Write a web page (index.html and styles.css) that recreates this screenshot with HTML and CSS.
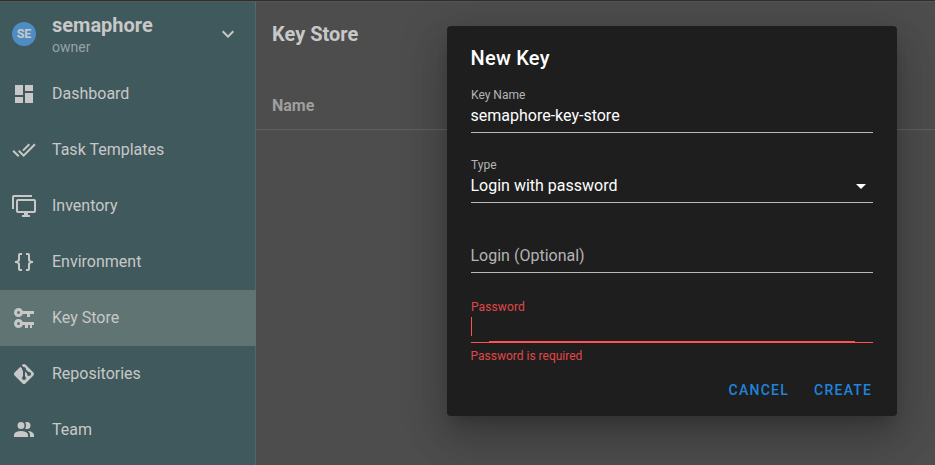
FILE: index.html
```html
<!DOCTYPE html>
<html lang="en">
<head>
<meta charset="utf-8">
<title>Key Store</title>
<link rel="stylesheet" href="styles.css">
</head>
<body>
<div class="app">
  <aside class="sidebar">
    <header class="project">
      <span class="avatar">SE</span>
      <div class="project-info">
        <div class="project-name">semaphore</div>
        <div class="project-role">owner</div>
      </div>
      <svg class="icon" viewBox="0 0 24 24"><path d="M7.41,8.58L12,13.17L16.59,8.58L18,10L12,16L6,10L7.41,8.58Z"/></svg>
    </header>
    <nav class="nav">
      <a class="nav-item"><svg class="icon" viewBox="0 0 24 24"><path d="M13,3V9H21V3M13,21H21V11H13M3,21H11V15H3M3,13H11V3H3V13Z"/></svg><span>Dashboard</span></a>
      <a class="nav-item"><svg class="icon" viewBox="0 0 24 24"><path d="M0.41,13.41L6,19L7.41,17.58L1.83,12M22.24,5.58L11.66,16.17L7.5,12L6.07,13.41L11.66,19L23.66,7M18,7L16.59,5.58L10.24,11.93L11.66,13.34L18,7Z"/></svg><span>Task Templates</span></a>
      <a class="nav-item"><svg class="icon" viewBox="0 0 24 24"><path d="M22,17V7H6V17H22M22,5A2,2 0 0,1 24,7V17C24,18.11 23.1,19 22,19H16V21H18V23H10V21H12V19H6C4.89,19 4,18.11 4,17V7A2,2 0 0,1 6,5H22M2,3V15H0V3A2,2 0 0,1 2,1H20V3H2Z"/></svg><span>Inventory</span></a>
      <a class="nav-item"><svg class="icon" viewBox="0 0 24 24"><path d="M8,3A2,2 0 0,0 6,5V9A2,2 0 0,1 4,11H3V13H4A2,2 0 0,1 6,15V19A2,2 0 0,0 8,21H10V19H8V14A2,2 0 0,0 6,12A2,2 0 0,0 8,10V5H10V3M16,3A2,2 0 0,1 18,5V9A2,2 0 0,0 20,11H21V13H20A2,2 0 0,0 18,15V19A2,2 0 0,1 16,21H14V19H16V14A2,2 0 0,1 18,12A2,2 0 0,1 16,10V5H14V3H16Z"/></svg><span>Environment</span></a>
      <a class="nav-item active"><svg class="icon" viewBox="0 0 24 24"><path d="M6.5,2C8.46,2 10.13,3.25 10.74,5H22V8H18V11H15V8H10.74C10.13,9.75 8.46,11 6.5,11C4,11 2,9 2,6.5C2,4 4,2 6.5,2M6.5,5A1.5,1.5 0 0,0 5,6.5A1.5,1.5 0 0,0 6.5,8A1.5,1.5 0 0,0 8,6.5A1.5,1.5 0 0,0 6.5,5M6.5,13C8.46,13 10.13,14.25 10.74,16H22V19H20V22H18V19H16V22H13V19H10.74C10.13,20.75 8.46,22 6.5,22C4,22 2,20 2,17.5C2,15 4,13 6.5,13M6.5,16A1.5,1.5 0 0,0 5,17.5A1.5,1.5 0 0,0 6.5,19A1.5,1.5 0 0,0 8,17.5A1.5,1.5 0 0,0 6.5,16Z"/></svg><span>Key Store</span></a>
      <a class="nav-item"><svg class="icon" viewBox="0 0 24 24"><path d="M2.6,10.59L8.38,4.8L10.07,6.5C9.83,7.35 10.22,8.28 11,8.73V14.27C10.4,14.61 10,15.26 10,16A2,2 0 0,0 12,18A2,2 0 0,0 14,16C14,15.26 13.6,14.61 13,14.27V9.41L15.07,11.5C15,11.65 15,11.82 15,12A2,2 0 0,0 17,14A2,2 0 0,0 19,12A2,2 0 0,0 17,10C16.82,10 16.65,10 16.5,10.07L13.93,7.5C14.19,6.57 13.71,5.55 12.78,5.16C12.35,5 11.9,4.96 11.5,5.07L9.8,3.38L10.59,2.6C11.37,1.81 12.63,1.81 13.41,2.6L21.4,10.59C22.19,11.37 22.19,12.63 21.4,13.41L13.41,21.4C12.63,22.19 11.37,22.19 10.59,21.4L2.6,13.41C1.81,12.63 1.81,11.37 2.6,10.59Z"/></svg><span>Repositories</span></a>
      <a class="nav-item"><svg class="icon" viewBox="0 0 24 24"><path d="M16 17V19H2V17S2 13 9 13 16 17 16 17M12.5 7.5A3.5 3.5 0 1 0 9 11A3.5 3.5 0 0 0 12.5 7.5M15.94 13A5.32 5.32 0 0 1 18 17V19H22V17S22 13.37 15.94 13M15 4A3.39 3.39 0 0 0 13.07 4.59A5 5 0 0 1 13.07 10.41A3.39 3.39 0 0 0 15 11A3.5 3.5 0 0 0 15 4Z"/></svg><span>Team</span></a>
    </nav>
  </aside>
  <main class="content">
    <h1 class="page-title">Key Store</h1>
    <div class="table-head">Name</div>
  </main>
</div>
<div class="overlay">
  <section class="dialog">
    <h2 class="dialog-title">New Key</h2>
    <div class="field">
      <div class="label">Key Name</div>
      <div class="value">semaphore-key-store</div>
    </div>
    <div class="field">
      <div class="label">Type</div>
      <div class="value select">Login with password<svg class="icon" viewBox="0 0 24 24"><path d="M7,10L12,15L17,10H7Z"/></svg></div>
    </div>
    <div class="field">
      <div class="label"></div>
      <div class="value placeholder">Login (Optional)</div>
    </div>
    <div class="field error">
      <div class="label">Password</div>
      <div class="value"><span class="caret"></span></div>
      <div class="focus-line"></div>
      <div class="message">Password is required</div>
    </div>
    <footer class="actions">
      <span class="button">CANCEL</span>
      <span class="button">CREATE</span>
    </footer>
  </section>
</div>
</body>
</html>
```
FILE: styles.css
```css
* { box-sizing: border-box; }

body {
  margin: 0;
  height: 465px;
  overflow: hidden;
  background: #4d4d4d;
  color: #c8c8c8;
  font: 16px/24px Roboto, sans-serif;
}

.icon {
  width: 24px;
  height: 24px;
  flex: none;
  fill: currentColor;
}

.app {
  display: flex;
  height: 465px;
  border-top: 1px solid #302d2e;
}

.sidebar {
  width: 256px;
  background: #40595c;
  border-top: 1px solid #51595b;
  border-right: 1px solid #52686a;
}

.project {
  display: flex;
  align-items: center;
  height: 64px;
  padding: 0 15px 0 12px;
}

.avatar {
  width: 24px;
  height: 24px;
  border-radius: 50%;
  background: #4d8dc4;
  font-size: 12.5px;
  font-weight: 700;
  text-align: center;
}

.project-info {
  flex: 1;
  margin-left: 16px;
  padding-top: 2px;
}

.project-name {
  font-size: 20px;
  font-weight: 700;
  line-height: 24px;
}

.project-role {
  font-size: 14px;
  line-height: 20px;
  color: #98a3a4;
}

.nav-item {
  display: flex;
  align-items: center;
  gap: 16px;
  height: 56px;
  padding: 0 12px;
}

.nav-item.active {
  margin-right: -1px;
  background: #607473;
}

.content {
  flex: 1;
  border-top: 1px solid #565656;
}

.page-title {
  margin: 0;
  padding: 16px;
  font-size: 20px;
  font-weight: 700;
  line-height: 32px;
}

.table-head {
  height: 64px;
  padding: 28px 16px 0;
  border-bottom: 1px solid #606060;
  color: #9f9f9f;
  font-weight: 700;
}

.overlay {
  position: absolute;
  inset: 0;
  padding: 26px 38px 49px 447px;
  overflow: hidden;
}

.dialog {
  height: 390px;
  padding: 16px 24px 0;
  border-radius: 4px;
  background: #1e1e1e;
  color: #fff;
  box-shadow: 0 11px 15px -7px rgba(0, 0, 0, .2),
    0 24px 38px 3px rgba(0, 0, 0, .14),
    0 9px 46px 8px rgba(0, 0, 0, .12);
}

.dialog-title {
  margin: 0;
  height: 43px;
  font-size: 20px;
  font-weight: 500;
  letter-spacing: .25px;
  line-height: 32px;
  text-indent: -.5px;
}

.field {
  height: 70px;
}

.label {
  height: 18px;
  font-size: 12px;
  line-height: 20px;
  color: #b4b4b4;
}

.value {
  display: flex;
  justify-content: space-between;
  height: 30px;
  padding-top: 3px;
  border-bottom: 1px solid #bbb;
  line-height: 20px;
  text-indent: -.5px;
}

.select .icon {
  margin: -2px .5px 0 0;
}

.placeholder {
  color: #b4b4b4;
}

.error .label,
.error .message {
  color: #e04848;
}

.error .label {
  line-height: 24px;
  letter-spacing: .1px;
}

.error .value {
  padding-top: 4px;
  border-color: #ff5252;
}

.caret {
  width: 1px;
  height: 19px;
  background: #ff5252;
}

.focus-line {
  height: 1px;
  margin: -2px 18px 1px;
  background: #ff5252;
}

.message {
  padding-top: 6px;
  font-size: 12px;
  line-height: 14px;
  text-indent: -.5px;
}

.actions {
  display: flex;
  justify-content: flex-end;
  gap: 25px;
  margin-top: 15px;
  padding-right: .75px;
}

.button {
  color: #2084dd;
  font-size: 14px;
  font-weight: 500;
  letter-spacing: 1.25px;
  line-height: 20px;
}
```
